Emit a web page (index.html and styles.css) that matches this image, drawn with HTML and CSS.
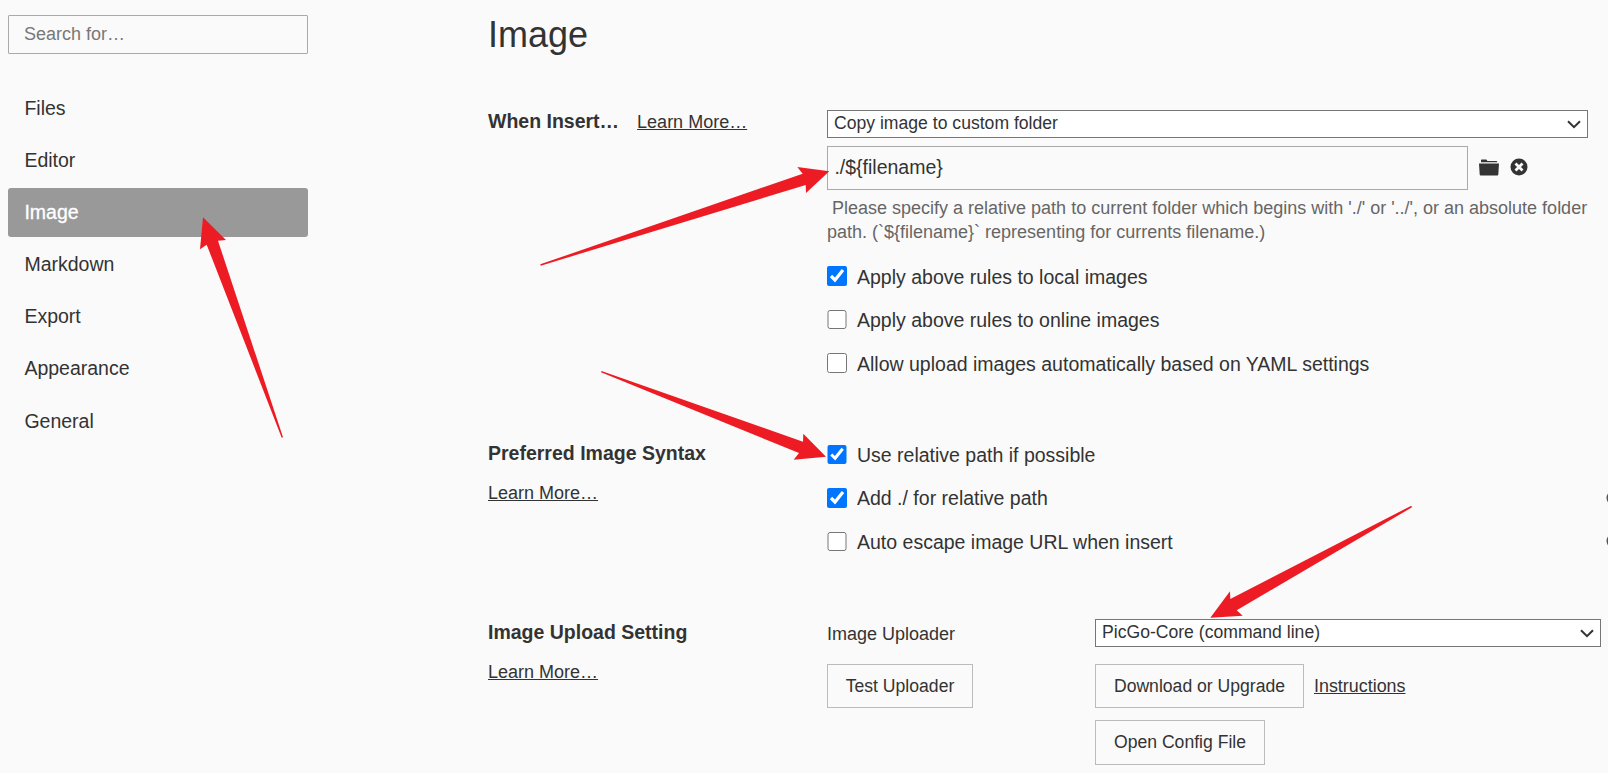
FILE: index.html
```html
<!DOCTYPE html>
<html lang="en">
<head>
<meta charset="utf-8">
<title>Preferences - Image</title>
<link rel="stylesheet" href="styles.css">
</head>
<body>
<div class="app">
  <aside class="sidebar">
    <input class="search" type="text" placeholder="Search for…">
    <nav class="menu">
      <a class="menu-item">Files</a>
      <a class="menu-item">Editor</a>
      <a class="menu-item active">Image</a>
      <a class="menu-item">Markdown</a>
      <a class="menu-item">Export</a>
      <a class="menu-item">Appearance</a>
      <a class="menu-item">General</a>
    </nav>
  </aside>

  <main class="main">
    <h1 class="title">Image</h1>

    <section class="section insert">
      <div class="heading inline">
        <h2 class="name">When Insert…</h2>
        <a class="link">Learn More…</a>
      </div>
      <div class="body">
        <div class="select wide">
          <span class="select-text">Copy image to custom folder</span>
          <svg class="chevron" viewBox="0 0 14 9"><path d="M1 1.2 7 7.2 13 1.2"/></svg>
        </div>
        <div class="path-row">
          <input class="path" type="text" value="./${filename}">
          <svg class="icon-folder" viewBox="0 0 20 17"><path d="M2 3V1.500Q2 .5 2.800.5H7Q7.800.5 8 1.300L8.300 2H17.500Q18.200 2 18.200 2.700V3.300H2ZM0 4.500H20L19.300 15.500Q19.200 16.500 18.300 16.500H1.700Q.8 16.500.7 15.500Z"/></svg>
          <svg class="icon-clear" viewBox="0 0 18 18"><circle cx="9" cy="9" r="8.500"/><path d="M5.500 5.500 12.500 12.500M12.500 5.500 5.500 12.500"/></svg>
        </div>
        <p class="hint">&nbsp;Please specify a relative path to current folder which begins with './' or '../', or an absolute folder<br>path. (`${filename}` representing for currents filename.)</p>
        <div class="checks">
          <label class="check"><input class="box" type="checkbox" checked>Apply above rules to local images</label>
          <label class="check"><input class="box" type="checkbox">Apply above rules to online images</label>
          <label class="check"><input class="box" type="checkbox">Allow upload images automatically based on YAML settings</label>
        </div>
      </div>
    </section>

    <section class="section syntax">
      <div class="heading">
        <h2 class="name">Preferred Image Syntax</h2>
        <a class="link">Learn More…</a>
      </div>
      <div class="body">
        <div class="checks">
          <label class="check"><input class="box" type="checkbox" checked>Use relative path if possible</label>
          <label class="check"><input class="box" type="checkbox" checked>Add ./ for relative path<svg class="help" viewBox="0 0 16 16"><circle cx="8" cy="8" r="6.500"/></svg></label>
          <label class="check"><input class="box" type="checkbox">Auto escape image URL when insert<svg class="help" viewBox="0 0 16 16"><circle cx="8" cy="8" r="6.500"/></svg></label>
        </div>
      </div>
    </section>

    <section class="section upload">
      <div class="heading">
        <h2 class="name">Image Upload Setting</h2>
        <a class="link">Learn More…</a>
      </div>
      <div class="uploader">
        <div class="col">
          <span class="label">Image Uploader</span>
          <button class="btn test">Test Uploader</button>
        </div>
        <div class="col">
          <div class="select">
            <span class="select-text">PicGo-Core (command line)</span>
            <svg class="chevron" viewBox="0 0 14 9"><path d="M1 1.2 7 7.2 13 1.2"/></svg>
          </div>
          <div class="btn-row">
            <button class="btn download">Download or Upgrade</button>
            <a class="link small">Instructions</a>
          </div>
          <button class="btn config">Open Config File</button>
        </div>
      </div>
    </section>
  </main>
</div>

<svg class="arrows" viewBox="0 0 1608 773">
  <path d="M203 217.300 226 240 218 240.700 283 437.300 281.700 437.700 206.700 244.700 200 249.300Z"/>
  <path d="M829.300 171.300 797.300 167 802.700 173.700 540.300 264.300 540.700 265.700 805.700 185 806 193Z"/>
  <path d="M826 456.700 803.300 433.700 803 441.700 601.500 371 601 372.300 799 453 793.700 459.700Z"/>
  <path d="M1210.300 617.700 1230 591.300 1230.300 599 1411.300 505.700 1412 507.300 1236.700 610.300 1242.700 615.700Z"/>
</svg>
</body>
</html>
```

FILE: styles.css
```css
* { box-sizing: border-box; }

body {
  margin: 0;
  background: #fafafa;
  color: #333;
  font-family: "Liberation Sans", Arial, sans-serif;
  font-size: 19.5px;
  overflow: hidden;
}

.app {
  display: flex;
  height: 773px;
  overflow: hidden;
}

/* Sidebar */
.sidebar {
  flex: none;
  width: 488px;
  padding: 15px 0 0 8px;
}

.search {
  display: block;
  width: 300px;
  height: 39px;
  padding: 0 15px 1px;
  border: 1px solid #aaa;
  border-radius: 1px;
  background: transparent;
  font: 18px "Liberation Sans", Arial, sans-serif;
}

.search::placeholder { color: #777; }

.menu {
  display: flex;
  flex-direction: column;
  gap: 3px;
  width: 300px;
  margin-top: 29.55px;
}

.menu-item {
  height: 49.18px;
  padding-left: 16.4px;
  border-radius: 3px;
  line-height: 49px;
}

.menu-item.active {
  background: #999;
  color: #fff;
  -webkit-text-stroke: .3px #fff;
}

/* Main pane */
.main {
  flex: none;
  width: 1140px;
  padding-top: 14px;
}

.title {
  margin: 0;
  font-size: 36px;
  font-weight: 400;
  line-height: 42px;
}

.section {
  display: grid;
  grid-template-columns: 339px 1fr;
}

.insert { margin-top: 54px; height: 332px; }
.syntax { height: 177px; }

.heading {
  display: flex;
  flex-direction: column;
  align-items: flex-start;
  gap: 19px;
}

.upload .heading { padding-top: 2px; }

.heading.inline {
  flex-direction: row;
  align-items: baseline;
  gap: 18px;
}

.name {
  margin: 0;
  font-size: 19.5px;
  font-weight: 700;
  line-height: 22px;
}

.link {
  font-size: 18px;
  line-height: 21px;
  text-decoration: underline;
}

.select {
  display: flex;
  align-items: center;
  justify-content: space-between;
  width: 506px;
  height: 28px;
  padding: 0 6px;
  border: 1px solid #767676;
  background: #fff;
  font-size: 17.6px;
}

.select.wide { width: 761px; }
.select-text { line-height: 24px; margin-top: -2px; }

.chevron {
  width: 14px;
  height: 9px;
  fill: none;
  stroke: #333;
  stroke-width: 2;
}

.path-row {
  display: flex;
  align-items: center;
  margin-top: 8px;
}

.path {
  width: 641px;
  height: 44px;
  padding: 0 6.4px 2px;
  border: 1px solid #aaa;
  background: transparent;
  color: #333;
  font: 19.5px "Liberation Sans", Arial, sans-serif;
}

.icon-folder {
  width: 20px;
  height: 17px;
  margin: -2px 0 0 11px;
  fill: #333;
}

.icon-clear {
  width: 18px;
  height: 18px;
  margin: -2px 0 0 11px;
  fill: #333;
}

.icon-clear path {
  stroke: #fafafa;
  stroke-width: 2.8;
}

.hint {
  margin: 6px 0 0;
  color: #666;
  font-size: 18px;
  line-height: 24px;
  white-space: nowrap;
}

.checks {
  display: flex;
  flex-direction: column;
  gap: 17.5px;
}

.insert .checks { margin-top: 20px; }
.syntax .checks { margin-top: .3px; }

.check {
  display: flex;
  align-items: center;
  height: 26px;
  white-space: nowrap;
}

.box {
  flex: none;
  width: 19.5px;
  height: 19.5px;
  margin: 0 10.5px 2px 0;
  accent-color: #0075ff;
}

.help {
  flex: none;
  width: 16px;
  height: 16px;
  margin: 0 6px 2px auto;
  fill: none;
  stroke: #555;
  stroke-width: 2;
}

.uploader {
  display: grid;
  grid-template-columns: 268px 1fr;
}

.col {
  display: flex;
  flex-direction: column;
  align-items: flex-start;
}

.label {
  height: 28px;
  font-size: 18px;
  line-height: 30px;
}

.btn {
  height: 44px;
  padding: 0;
  border: 1px solid #bbb;
  background: transparent;
  color: #333;
  font: 17.6px "Liberation Sans", Arial, sans-serif;
}

.test { width: 146px; margin-top: 17px; }
.download { width: 209px; }
.config { width: 170px; height: 45px; margin-top: 12px; }

.btn-row {
  display: flex;
  align-items: center;
  gap: 10px;
  margin-top: 17px;
}

.small { font-size: 17.9px; }

/* Annotation arrows drawn over the page */
.arrows {
  position: absolute;
  top: 0;
  left: 0;
  width: 1608px;
  height: 773px;
  fill: #ed1c24;
  pointer-events: none;
}
```
